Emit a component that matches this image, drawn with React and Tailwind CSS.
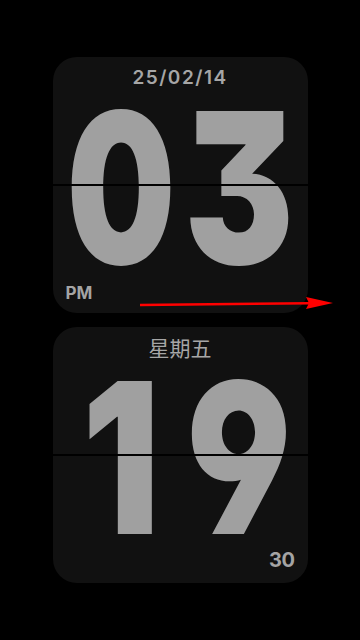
import React from "react";

const row = "mt-[15px] h-[170px] flex justify-center whitespace-nowrap";
const cellBase = "w-[118px] h-[170px] flex justify-center";
const glyph = "block leading-[170px] text-[210px] font-black text-[#a0a0a0]";

const feat = { fontFeatureSettings: "'cv09', 'ss01'" };

function Digit({ ch }) {
  const scale = ch === "0" ? "scale-x-[0.73]" : ch === "1" ? "scale-x-[0.82]" : "scale-x-[0.78]";
  return (
    <div className={`${cellBase} ${scale}`}>
      <span className={glyph}>{ch}</span>
    </div>
  );
}

function Digits({ a, b }) {
  return (
    <div className={row} style={feat}>
      <Digit ch={a} />
      <Digit ch={b} />
    </div>
  );
}

export default function App() {
  return (
    <div
      className="relative min-h-[640px] w-[360px] bg-black pt-[57px] flex flex-col items-center gap-[14px]"
      style={{ fontFamily: "Inter, 'Noto Sans CJK SC', sans-serif" }}
    >
      <div className="relative w-[255px] h-[256px] rounded-[24px] bg-[#111111] overflow-hidden flex flex-col items-center">
        <div className="mt-[11px] h-[20px] leading-[20px] text-[19px] font-semibold tracking-[1.5px] text-[#a6a6a6]">
          25/02/14
        </div>
        <Digits a="0" b="3" />
        <div className="absolute left-0 right-0 top-[127px] h-[2px] bg-black" />
        <div className="absolute left-[13px] bottom-[11px] h-[17px] leading-[17px] text-[17px] font-bold text-[#a4a4a4]">
          PM
        </div>
      </div>

      <div className="relative w-[255px] h-[256px] rounded-[24px] bg-[#111111] overflow-hidden flex flex-col items-center">
        <div
          className="mt-[10px] h-[21px] leading-[21px] text-[21px] text-[#a6a6a6]"
          style={{ fontFamily: "'Noto Sans CJK SC', sans-serif" }}
        >
          星期五
        </div>
        <Digits a="1" b="9" />
        <div className="absolute left-0 right-0 top-[127px] h-[2px] bg-black" />
        <div className="absolute right-[13px] bottom-[13px] h-[20px] leading-[20px] text-[20px] font-bold tracking-[-0.5px] text-[#a4a4a4]">
          30
        </div>
      </div>

      <svg
        className="absolute left-0 top-0 pointer-events-none"
        width="360"
        height="640"
        viewBox="0 0 360 640"
      >
        <line x1="140" y1="305" x2="310" y2="303.3" stroke="#ff0000" strokeWidth="2.5" />
        <polygon points="306,297 333,303 306,309 309,303" fill="#ff0000" />
      </svg>
    </div>
  );
}
